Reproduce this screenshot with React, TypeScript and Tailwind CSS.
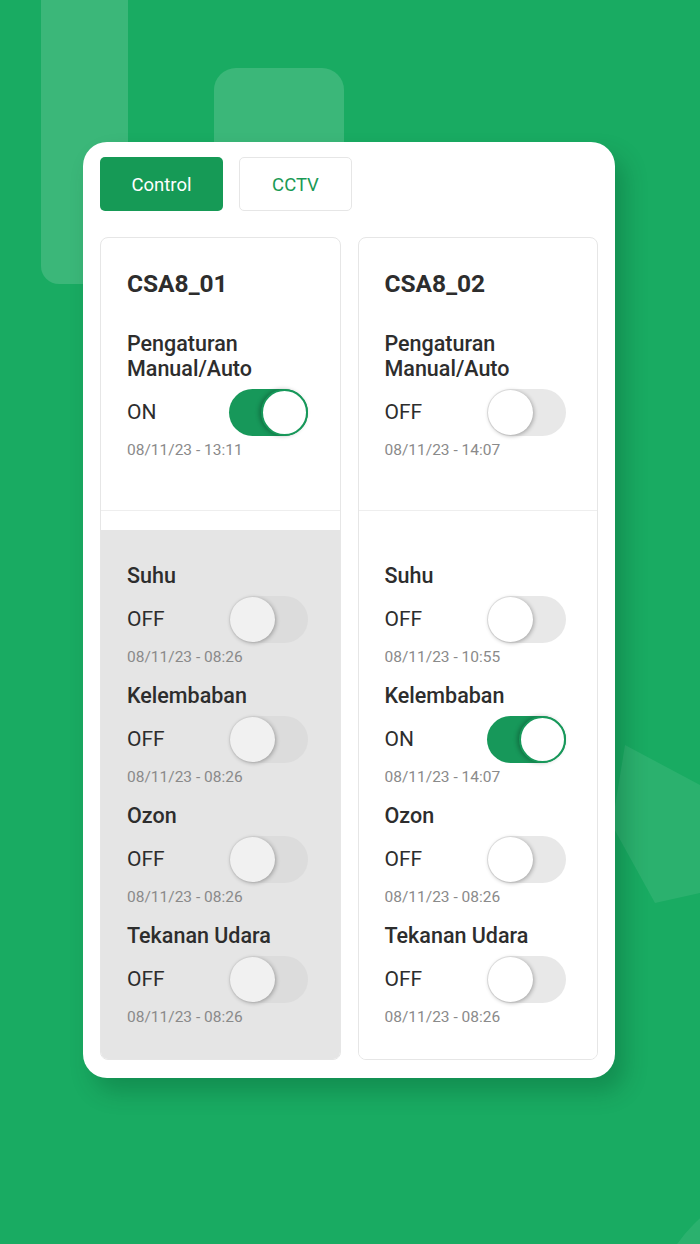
import React from 'react';

type Item = { title: string; on: boolean; time: string };

const Toggle: React.FC<{ on: boolean; muted?: boolean }> = ({ on, muted }) => {
  if (on) {
    return (
      <div className="relative h-[47px] w-[79px] rounded-full bg-[#17985a]">
        <div className="absolute right-0 top-0 h-[47px] w-[47px] rounded-full border-2 border-[#17985a] bg-white shadow-[-2px_0_4px_rgba(0,0,0,0.25)]" />
      </div>
    );
  }
  return (
    <div className={`relative h-[47px] w-[79px] rounded-full ${muted ? 'bg-[#dcdcdc]' : 'bg-[#e8e8e8]'}`}>
      <div
        className={`absolute left-[1px] top-[1px] h-[45px] w-[45px] rounded-full shadow-[1px_1px_4px_rgba(0,0,0,0.3)] ${
          muted ? 'bg-[#f1f1f1]' : 'bg-white'
        }`}
      />
    </div>
  );
};

const Row: React.FC<{ label: string; on: boolean; muted?: boolean }> = ({ label, on, muted }) => (
  <div className="flex items-center">
    <span className="w-[102px] text-[21px] leading-[25px] text-[#2d2d2d]">{label}</span>
    <Toggle on={on} muted={muted} />
  </div>
);

const Panel: React.FC<{ name: string; manual: Item; sensors: Item[]; muted: boolean }> = ({
  name,
  manual,
  sensors,
  muted,
}) => (
  <div className="flex flex-col overflow-hidden rounded-[8px] border border-[#e6e6e6]">
    {/* header */}
    <div className="border-b border-[#eeeeee] px-[26px] pb-[51px] pt-[32px]">
      <div className="text-[24.5px] font-bold leading-[28px] text-[#2d2d2d]">{name}</div>
      <div className="mt-[33px] text-[21.5px] font-medium leading-[25px] text-[#2d2d2d]">
        Pengaturan
        <br />
        Manual/Auto
      </div>
      <div className="mt-[8px]">
        <Row label={manual.on ? 'ON' : 'OFF'} on={manual.on} />
      </div>
      <div className="mt-[5px] text-[15.5px] leading-[18px] text-[#8a8a8a]">{manual.time}</div>
    </div>

    <div className="h-[19px] bg-white" />

    {/* sensors */}
    <div className={`flex flex-1 flex-col gap-[17px] px-[26px] pb-[33px] pt-[33px] ${muted ? 'bg-[#e5e5e5]' : 'bg-white'}`}>
      {sensors.map((s) => (
        <div key={s.title} className="flex flex-col">
          <div className="text-[21.5px] font-medium leading-[25px] text-[#2d2d2d]">{s.title}</div>
          <div className="mt-[8px]">
            <Row label={s.on ? 'ON' : 'OFF'} on={s.on} muted={muted} />
          </div>
          <div className="mt-[5px] text-[15.5px] leading-[18px] text-[#8a8a8a]">{s.time}</div>
        </div>
      ))}
    </div>
  </div>
);

export default function App() {
  return (
    <div
      className="relative min-h-[1244px] w-full overflow-hidden bg-[#19ab62]"
      style={{ fontFamily: 'Roboto, "Noto Sans", sans-serif' }}
    >
      {/* background decoration */}
      <div className="absolute left-[41px] top-[-20px] h-[304px] w-[87px] rounded-b-[18px] bg-white/15" />
      <div className="absolute left-[214px] top-[68px] h-[200px] w-[130px] rounded-[22px] bg-white/15" />
      <svg className="absolute left-0 top-0" width="700" height="1244">
        <polygon points="625,745 700,785 700,893 655,903 612,825" fill="rgba(255,255,255,0.08)" />
        <circle cx="800" cy="1330" r="150" fill="rgba(255,255,255,0.08)" />
      </svg>

      {/* card */}
      <div className="relative ml-[83px] mt-[142px] w-[532px] rounded-[24px] bg-white px-[17px] pb-[18px] pt-[15px] shadow-[10px_14px_22px_rgba(0,60,30,0.25)]">
        <div className="flex gap-[16px]">
          <button className="h-[54px] w-[123px] rounded-[5px] bg-[#169a56] pt-[3px] text-[18.5px] text-white">Control</button>
          <button className="h-[54px] w-[113px] rounded-[5px] border border-[#e6e6e6] bg-white pt-[3px] text-[18.5px] text-[#1a9a55]">
            CCTV
          </button>
        </div>

        <div className="mt-[26px] grid grid-cols-2 gap-[17px]">
          <Panel
            name="CSA8_01"
            manual={{ title: 'Pengaturan', on: true, time: '08/11/23 - 13:11' }}
            muted
            sensors={[
              { title: 'Suhu', on: false, time: '08/11/23 - 08:26' },
              { title: 'Kelembaban', on: false, time: '08/11/23 - 08:26' },
              { title: 'Ozon', on: false, time: '08/11/23 - 08:26' },
              { title: 'Tekanan Udara', on: false, time: '08/11/23 - 08:26' },
            ]}
          />
          <Panel
            name="CSA8_02"
            manual={{ title: 'Pengaturan', on: false, time: '08/11/23 - 14:07' }}
            muted={false}
            sensors={[
              { title: 'Suhu', on: false, time: '08/11/23 - 10:55' },
              { title: 'Kelembaban', on: true, time: '08/11/23 - 14:07' },
              { title: 'Ozon', on: false, time: '08/11/23 - 08:26' },
              { title: 'Tekanan Udara', on: false, time: '08/11/23 - 08:26' },
            ]}
          />
        </div>
      </div>
    </div>
  );
}
